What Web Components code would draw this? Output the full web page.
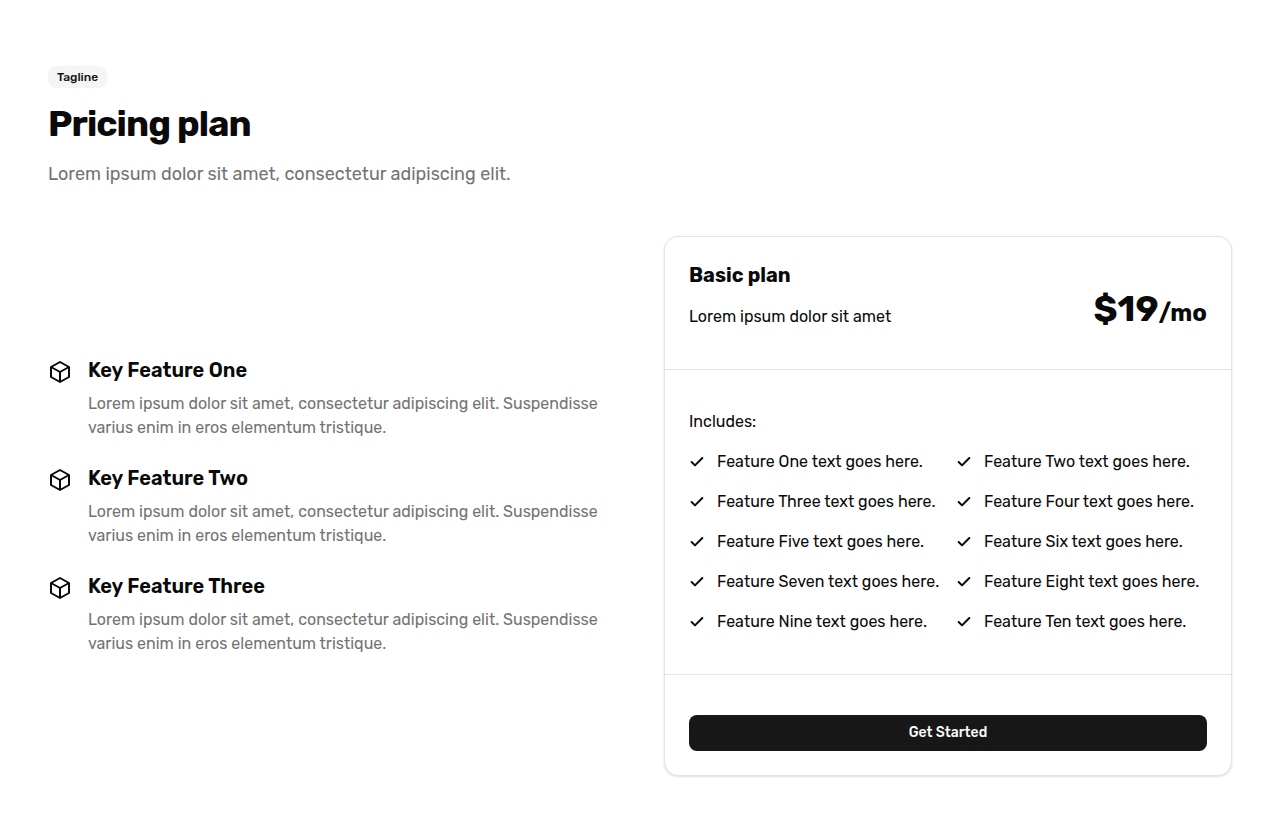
<!DOCTYPE html>
<html lang="en">
<head>
<meta charset="utf-8">
<title>Pricing plan</title>
<style>
html, body { margin: 0; background: #fff; }
body { font-family: Rubik, Roboto, sans-serif; color: #0a0a0a; }
</style>
</head>
<body>
<pricing-section></pricing-section>
<script>
const define = (name, markup) => customElements.define(name, class extends HTMLElement {
  constructor() {
    super();
    this.attachShadow({ mode: 'open' }).innerHTML = markup;
  }
});

define('tag-badge', `
<style>
:host { display: inline-flex; box-sizing: border-box; height: 22px; padding: 3px 9px; border-radius: 8px;
  background: #f5f5f5; color: #171717; font-size: 12px; line-height: 16px; font-weight: 500; white-space: nowrap; }
</style><slot></slot>`);

define('key-feature', `
<style>
:host { display: flex; gap: 16px; }
svg { flex: none; width: 24px; height: 24px; margin-top: 4px; }
.title { font-size: 20px; line-height: 28px; font-weight: 600; margin-bottom: 8px; }
.copy { font-size: 16px; line-height: 24px; color: #737373; }
</style>
<svg viewBox="0 0 24 24" fill="none" stroke="currentColor" stroke-width="2" stroke-linejoin="round"><path d="M12 2l9 5v10l-9 5-9-5V7z"/><path d="M3 7l9 5 9-5M12 22V12"/></svg>
<div><div class="title"><slot name="title"></slot></div><div class="copy"><slot></slot></div></div>`);

define('check-item', `
<style>
:host { display: flex; align-items: center; gap: 12px; font-size: 16px; line-height: 24px; white-space: nowrap; }
svg { flex: none; width: 16px; height: 16px; }
</style>
<svg viewBox="0 0 24 24" fill="none" stroke="currentColor" stroke-width="3" stroke-linecap="round" stroke-linejoin="round"><path d="M20 6 9 17l-5-5"/></svg>
<slot></slot>`);

define('cta-button', `
<style>
:host { display: block; }
button { display: flex; align-items: center; justify-content: center; width: 100%; height: 36px; padding: 0; border: 0;
  border-radius: 8px; background: #171717; color: #fafafa; font: 500 14px/20px Rubik, Roboto, sans-serif; }
</style><button type="button"><slot></slot></button>`);

define('plan-card', `
<style>
:host { display: block; box-sizing: border-box; height: 540px; border: 1px solid #e5e5e5; border-radius: 14px; background: #fff;
  box-shadow: 0 1px 3px rgba(0,0,0,.1), 0 1px 2px -1px rgba(0,0,0,.1); }
header { display: flex; justify-content: space-between; box-sizing: border-box; height: 133px; padding: 24px 24px 0; border-bottom: 1px solid #e5e5e5; }
.name { font-size: 20px; line-height: 28px; font-weight: 700; }
.desc { font-size: 16px; line-height: 24px; margin-top: 16px; }
.price { margin-top: 28px; font-size: 36px; line-height: 40px; font-weight: 700; }
.price .per { font-size: 24px; line-height: 32px; font-weight: 700; }
.features { box-sizing: border-box; height: 305px; padding: 40px 24px 0; border-bottom: 1px solid #e5e5e5; font-size: 16px; line-height: 24px; }
.grid { display: grid; grid-template-columns: 1fr 1fr; gap: 16px; margin-top: 16px; }
footer { padding: 40px 24px 24px; }
</style>
<header>
  <div><div class="name">Basic plan</div><div class="desc">Lorem ipsum dolor sit amet</div></div>
  <div class="price">$19<span class="per">/mo</span></div>
</header>
<div class="features">
  <div>Includes:</div>
  <div class="grid">
    ${['One', 'Two', 'Three', 'Four', 'Five', 'Six', 'Seven', 'Eight', 'Nine', 'Ten'].map(n => `<check-item>Feature ${n} text goes here.</check-item>`).join('')}
  </div>
</div>
<footer><cta-button>Get Started</cta-button></footer>`);

define('pricing-section', `
<style>
:host { display: block; box-sizing: border-box; height: 840px; padding: 66px 48px 0; }
.intro { height: 170px; }
tag-badge { vertical-align: top; }
h1 { margin: 16px 0 0; font-size: 36px; line-height: 40px; font-weight: 700; letter-spacing: -0.025em; }
.lead { margin-top: 16px; font-size: 18px; line-height: 28px; color: #737373; }
.columns { display: grid; grid-template-columns: 568px 568px; gap: 48px; align-items: center; }
.list { display: grid; gap: 24px; }
</style>
<div class="intro">
  <tag-badge>Tagline</tag-badge>
  <h1>Pricing plan</h1>
  <div class="lead">Lorem ipsum dolor sit amet, consectetur adipiscing elit.</div>
</div>
<div class="columns">
  <div class="list">
    ${['One', 'Two', 'Three'].map(n => `<key-feature><span slot="title">Key Feature ${n}</span>Lorem ipsum dolor sit amet, consectetur adipiscing elit. Suspendisse varius enim in eros elementum tristique.</key-feature>`).join('')}
  </div>
  <plan-card></plan-card>
</div>`);
</script>
</body>
</html>
